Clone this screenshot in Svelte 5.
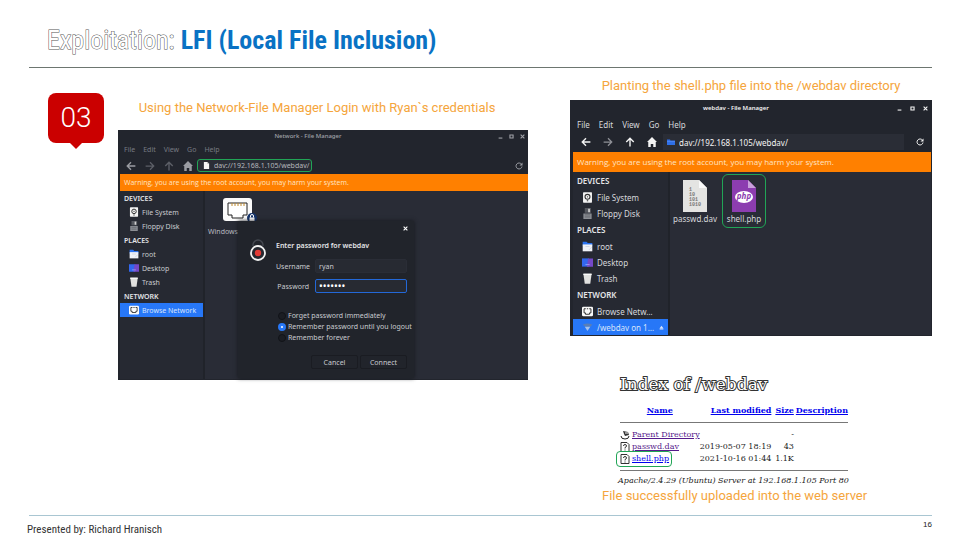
<script>
  const menus = ['File', 'Edit', 'View', 'Go', 'Help'];
  const base = [
    { head: 'DEVICES' },
    { icon: 'disk', label: 'File System' },
    { icon: 'floppy', label: 'Floppy Disk' },
    { head: 'PLACES' },
    { icon: 'folder', label: 'root' },
    { icon: 'desktop', label: 'Desktop' },
    { icon: 'trash', label: 'Trash' },
    { head: 'NETWORK' }
  ];
  const networkPlaces = [...base, { icon: 'network', label: 'Browse Network', active: true }];
  const davPlaces = [
    ...base,
    { icon: 'network', label: 'Browse Netw…' },
    { icon: 'share', label: '/webdav on 1…', active: true, eject: true }
  ];
  const files = [
    { name: 'passwd.dav', kind: 'memory', date: '2019-05-07 18:19', size: '43' },
    { name: 'shell.php', kind: 'php', date: '2021-10-16 01:44', size: '1.1K' }
  ];
  let username = $state('ryan');
  let password = $state('kali123');
  let remember = $state('session');
  const choices = [
    { value: 'never', label: 'Forget password immediately' },
    { value: 'session', label: 'Remember password until you logout' },
    { value: 'always', label: 'Remember forever' }
  ];
</script>

{#snippet icon(name)}
  <svg class="icon" viewBox="0 0 16 16" aria-hidden="true">
    {#if name === 'disk'}
      <rect x="1.5" y="0.5" width="13" height="15" rx="1" fill="#f4f4f4" />
      <circle cx="8" cy="7" r="3.6" fill="none" stroke="#333" stroke-width="1.6" />
      <circle cx="8" cy="7" r="0.9" fill="#333" />
      <path d="M7 12h2v1.5H7z" fill="#333" />
    {:else if name === 'floppy'}
      <path d="M4 0h9v7H4z" fill="#55585f" />
      <path d="M9 1h2.5v5H9z" fill="#d0d0d0" />
      <path d="M2 8h12v8H2z" fill="#8b8e94" />
      <path d="M4 10h8M4 13h8" stroke="#55585f" />
    {:else if name === 'folder'}
      <path d="M1 1h5.5l2 2H15v4H1z" fill="#2b73f0" />
      <path d="M1 5h14v10H1z" fill="#f0f2f7" />
      <path d="M5 8h6M10 13l4-4" stroke="#c8ccd8" />
    {:else if name === 'desktop'}
      <path d="M0 2h10v12H0z" fill="#3367ee" />
      <path d="M9 2h7v12H7z" fill="#7448c8" />
      <path d="M5 11h6" stroke="#a9b9ff" />
    {:else if name === 'trash'}
      <path d="M2 1h12l-2 14.5H4z" fill="#e1e1df" />
      <path d="M2 1h12v2H2z" fill="#fafafa" />
    {:else if name === 'network'}
      <rect x="0" y="1" width="16" height="14" rx="2" fill="#fafafa" />
      <path d="M3 4h2.5M7 4h2M10.5 4H13v6h-2v2H5v-2H3V4" fill="none" stroke="#222" stroke-width="1.3" />
    {:else if name === 'share'}
      <path d="M1 4q7-4 14 0l-3 3H5z" fill="#5b7fb5" />
      <path d="M4 7h8l-4 6z" fill="#a5c3ee" />
    {:else if name === 'bluefolder'}
      <path d="M0 3h6l1 2h9v9H0z" fill="#2e6fe8" />
      <path d="M0 7h16" stroke="#5f97ff" />
    {:else if name === 'page'}
      <path d="M2 0h8l4 4v12H2z" fill="#f5f5f5" />
      <path d="M10 0v4h4z" fill="#a6a6a6" />
    {:else if name === 'back'}
      <path d="M15 8H2M8 2L2 8l6 6" fill="none" stroke="currentColor" stroke-width="2.2" />
    {:else if name === 'forward'}
      <path d="M1 8h13M8 2l6 6-6 6" fill="none" stroke="currentColor" stroke-width="2" />
    {:else if name === 'up'}
      <path d="M8 15V2M2 8l6-6 6 6" fill="none" stroke="currentColor" stroke-width="2.2" />
    {:else if name === 'home'}
      <path d="M8 0l8 8h-2v8h-4v-5H6v5H2V8H0z" fill="currentColor" />
    {:else if name === 'reload'}
      <path d="M13 4.5A6 6 0 1 0 14 9" fill="none" stroke="currentColor" stroke-width="2" />
      <path d="M15 1v6H9z" fill="currentColor" />
    {:else if name === 'min'}
      <path d="M2 13h12" stroke="currentColor" stroke-width="3.5" />
    {:else if name === 'max'}
      <path d="M3 3h10v10H3z" fill="none" stroke="currentColor" stroke-width="3.5" />
    {:else if name === 'close'}
      <path d="M2 2l12 12M14 2L2 14" stroke="currentColor" stroke-width="3.5" />
    {:else if name === 'eject'}
      <path d="M8 2l6 8H2zM2 11.5h12V14H2z" fill="currentColor" />
    {/if}
  </svg>
{/snippet}

{#snippet manager(title, pathIcon, kind, places, body)}
  <section class="window {kind}" aria-label={title}>
    <header class="titlebar">
      <span class="title">{title}</span>
      <span class="controls">
        <button aria-label="Minimize">{@render icon('min')}</button>
        <button aria-label="Maximize">{@render icon('max')}</button>
        <button aria-label="Close">{@render icon('close')}</button>
      </span>
    </header>
    <nav class="menu">
      {#each menus as m}<button>{m}</button>{/each}
    </nav>
    <div class="toolbar">
      <button aria-label="Back">{@render icon('back')}</button>
      <button class="off" aria-label="Forward">{@render icon('forward')}</button>
      <button class="up" aria-label="Up">{@render icon('up')}</button>
      <button aria-label="Home">{@render icon('home')}</button>
      <label class="path">
        {@render icon(pathIcon)}
        <input aria-label="Location" value="dav://192.168.1.105/webdav/" />
      </label>
      <button class="reload" aria-label="Reload">{@render icon('reload')}</button>
    </div>
    <p class="warning">Warning, you are using the root account, you may harm your system.</p>
    <div class="panes">
      <ul class="places">
        {#each places as p}
          {#if p.head}
            <li class="head">{p.head}</li>
          {:else}
            <li class:active={p.active}>
              {@render icon(p.icon)}<span>{p.label}</span>
              {#if p.eject}<i class="eject">{@render icon('eject')}</i>{/if}
            </li>
          {/if}
        {/each}
      </ul>
      <div class="files">{@render body()}</div>
    </div>
  </section>
{/snippet}

{#snippet networkBody()}
  <div class="share">
    <svg viewBox="0 0 34 26" aria-hidden="true">
      <rect x="0" y="0" width="29" height="23" rx="3" fill="#fbfbfb" />
      <path d="M5 5h19v12h-4v3H9v-3H5z" fill="#fff" stroke="#222" stroke-width="1" />
      <path d="M9 5v3M12 5v3M15 5v3M18 5v3M21 5v3" stroke="#c08a2d" />
      <circle cx="29" cy="20" r="5" fill="#16346a" />
      <path d="M26.5 19.5h5v3.5h-5z" fill="#fff" />
      <path d="M27.5 19.5v-1.5a1.5 1.5 0 0 1 3 0v1.5" fill="none" stroke="#fff" />
    </svg>
    <span>Windows</span>
  </div>
  <form class="dialog" onsubmit={(e) => e.preventDefault()}>
    <button type="button" class="dismiss" aria-label="Close dialog">{@render icon('close')}</button>
    <svg class="auth" viewBox="0 0 18 22" aria-hidden="true">
      <path d="M4 6V5a5 5 0 0 1 10 0v1" fill="none" stroke="#444850" stroke-width="1.4" />
      <circle cx="9" cy="13" r="7" fill="#252830" stroke="#f2f2f2" stroke-width="1.8" />
      <circle cx="9" cy="13" r="3.2" fill="#e23b36" />
    </svg>
    <div class="fields">
      <strong>Enter password for webdav</strong>
      <div class="field">
        <label for="user">Username</label><input id="user" bind:value={username} />
      </div>
      <div class="field">
        <label for="pass">Password</label>
        <input id="pass" class="focused" type="password" bind:value={password} />
      </div>
      <div class="choices">
        {#each choices as c}
          <label><input type="radio" name="remember" value={c.value} bind:group={remember} />{c.label}</label>
        {/each}
      </div>
      <div class="actions"><button type="button">Cancel</button><button>Connect</button></div>
    </div>
  </form>
{/snippet}

{#snippet davBody()}
  <div class="grid">
    {#each files as f}
      <div class="file" class:marked={f.kind === 'php'}>
        <svg viewBox="0 0 26 32" aria-hidden="true">
          {#if f.kind === 'php'}
            <path d="M1 0h16l8 8v24H1z" fill="#8c3db0" />
            <path d="M17 0l8 8h-8z" fill="#c9a0dc" />
            <ellipse cx="13" cy="17" rx="9" ry="6" fill="#fff" />
            <text x="13" y="19" text-anchor="middle" class="php">php</text>
          {:else}
            <path d="M1 0h16l8 8v24H1z" fill="#e4e4e2" />
            <path d="M17 0l8 8h-8z" fill="#fafafa" />
            <text x="7" y="11" class="bits">1</text>
            <text x="7" y="16" class="bits">10</text>
            <text x="7" y="21" class="bits">101</text>
            <text x="7" y="26" class="bits">1010</text>
          {/if}
        </svg>
        <span>{f.name}</span>
      </div>
    {/each}
  </div>
{/snippet}

<div class="slide">
  <h1><span class="outline">Exploitation:</span> <b>LFI (Local File Inclusion)</b></h1>
  <main>
    <div class="badge">03</div>
    <figure class="first">
      <figcaption>Using the Network-File Manager Login with Ryan`s credentials</figcaption>
      {@render manager('Network - File Manager', 'page', 'small', networkPlaces, networkBody)}
    </figure>
    <div class="second">
      <figure>
        <figcaption>Planting the shell.php file into the /webdav directory</figcaption>
        {@render manager('webdav - File Manager', 'bluefolder', 'large', davPlaces, davBody)}
      </figure>
      <figure class="listing">
        <h2>Index of /webdav</h2>
        <table>
          <thead>
            <tr>
              <th><a href="#name">Name</a></th>
              <th><a href="#modified">Last modified</a></th>
              <th><a href="#size">Size</a></th>
              <th><a href="#description">Description</a></th>
            </tr>
          </thead>
          <tbody>
            <tr>
              <td>
                <span class="entry">
                  <svg viewBox="0 0 10 10" aria-hidden="true">
                    <path d="M1 6q0 3 4 3t4-3" fill="none" stroke="#222" />
                    <path d="M3 1l5 1 1 3-4 1-1-2z" fill="#333" />
                    <path d="M5 3h3" stroke="#fff" />
                  </svg>
                  <a class="seen" href="#parent">Parent Directory</a>
                </span>
              </td>
              <td></td><td>-</td><td></td>
            </tr>
            {#each files as f}
              <tr>
                <td>
                  <span class="entry" class:ringed={f.kind === 'php'}>
                    <svg viewBox="0 0 10 10" aria-hidden="true">
                      <path d="M1 .5h6l2 2v7H1z" fill="#fff" stroke="#333" />
                      <path d="M3.5 4q0-1.500 1.500-1.500T6.500 4Q6.500 5 5 5.500v1M5 7.500v1" fill="none" stroke="#333" />
                    </svg>
                    <a class:seen={f.kind !== 'php'} href="#{f.name}">{f.name}</a>
                  </span>
                </td>
                <td>{f.date}</td><td>{f.size}</td><td></td>
              </tr>
            {/each}
          </tbody>
        </table>
        <address>Apache/2.4.29 (Ubuntu) Server at 192.168.1.105 Port 80</address>
        <figcaption>File successfully uploaded into the web server</figcaption>
      </figure>
    </div>
  </main>
  <footer><span class="author">Presented by: Richard Hranisch</span><span>16</span></footer>
</div>

<style>
  :global(body) { margin: 0; background: #fff; }
  .slide {
    box-sizing: border-box;
    min-height: 100vh;
    display: flex;
    flex-direction: column;
    padding-right: 28px;
    font-family: Roboto, "Liberation Sans", sans-serif;
  }
  button, input { font: inherit; color: inherit; border: 0; padding: 0; background: none; }
  .icon { display: block; flex: none; }
  h1 {
    margin: 0 0 0 29px;
    padding: 14px 0 0 18px;
    height: 53px;
    border-bottom: 1px solid #6d7670;
    font: 26px/52px "Roboto Condensed", Roboto, sans-serif;
    white-space: nowrap;
  }
  h1 b { color: #0972c4; }
  .outline { color: #fff; -webkit-text-stroke: 1px #555; paint-order: stroke fill; }
  main {
    flex: 1;
    display: grid;
    grid-template-columns: 56px minmax(0, 424fr) minmax(0, 404fr);
    align-items: start;
    padding-left: 48px;
  }
  .badge {
    position: relative;
    margin-top: 25px;
    border-radius: 8px;
    background: #cb0000;
    color: #fff;
    font-size: 28px;
    font-weight: 300;
    line-height: 50px;
    text-align: center;
  }
  .badge::after {
    content: "";
    position: absolute;
    top: 100%;
    left: 50%;
    margin-left: -6px;
    border: 6px solid transparent;
    border-top-color: #cb0000;
    border-bottom: 0;
  }
  figure { margin: 0; }
  figcaption { color: #f5a53c; font-size: 13px; font-weight: 400; line-height: 20px; text-align: center; white-space: nowrap; }
  .first { padding: 30px 0 0 14px; }
  .first figcaption { margin: 0 12px 12px 0; }
  .second { padding: 8px 0 0 42px; }
  .second figcaption { margin-bottom: 4px; }

  .window { position: relative; background: #22252d; color: #c9cbd0; font-family: "Noto Sans", sans-serif; white-space: nowrap; }
  .titlebar { position: relative; box-sizing: border-box; padding-right: 32px; display: flex; justify-content: center; align-items: center; font-weight: 600; }
  .controls { position: absolute; right: 3px; display: flex; gap: 6px; }
  .controls .icon { width: 5px; height: 5px; }
  .menu { display: flex; align-items: center; }
  .toolbar { display: flex; align-items: center; }
  .path { flex: 1; display: flex; align-items: center; box-sizing: border-box; background: #2a2d36; }
  .path input { flex: 1; min-width: 0; outline: 0; }
  .warning { margin: 0; background: #ff8000; color: #ffe5c5; font-family: "Open Sans", "Noto Sans", sans-serif; }
  .panes { display: flex; background: #292c36; }
  .places { margin: 0; padding: 0; list-style: none; border-right: 2px solid #20232a; background: #262932; }
  .places li { display: flex; align-items: center; box-sizing: border-box; }
  .places .head { font-weight: 600; color: #e4e5e8; }
  .places .active { background: #2777f7; color: #d7e4fb; }
  .eject { margin-left: auto; margin-right: 4px; }
  .eject .icon { width: 5px; height: 5px; }
  .files { flex: 1; min-width: 0; }

  .small { font-size: 7px; padding: 0 0 1px 2px; }
  .small .titlebar { height: 12px; font-size: 6px; font-weight: 500; color: #a0a2a8; }
  .small .menu { height: 15px; gap: 8px; padding-left: 4px; color: #777a82; }
  .small .toolbar { height: 17px; gap: 9px; padding-left: 6px; color: #9a9ca2; }
  .small .toolbar button .icon { width: 10px; height: 10px; }
  .small .toolbar .off, .small .toolbar .up { color: #5c5f67; }
  .small .path { flex: none; width: 115px; height: 13px; gap: 4px; margin-left: -5px; padding-left: 5px; border: 1px solid #21a556; border-radius: 3px; color: #b5b7bc; }
  .small .path .icon { width: 7px; height: 7px; }
  .small .reload { margin-left: auto; margin-right: 5px; }
  .small .toolbar .reload .icon { width: 8px; height: 8px; }
  .small .warning { line-height: 17px; padding-left: 4px; }
  .small .panes { height: 188px; }
  .small .places { width: 83px; }
  .small .places li { height: 14px; padding-left: 9px; gap: 3px; }
  .small .places li .icon { width: 10px; height: 10px; }
  .small .places .head { padding-left: 4px; }

  .large { font-size: 8px; padding: 0 1px 1px 3px; color: #d6d8dc; }
  .large .titlebar { height: 16px; font-size: 6px; color: #f4f4f4; }
  .large .controls { gap: 8px; }
  .large .menu { height: 16px; gap: 9px; padding-left: 4px; }
  .large .toolbar { height: 20px; gap: 12px; padding-left: 8px; color: #f4f4f4; }
  .large .toolbar button .icon { width: 10px; height: 10px; }
  .large .toolbar .off { color: #8f9197; }
  .large .path { height: 16px; gap: 4px; margin-left: -6px; padding-left: 4px; }
  .large .path .icon { width: 8px; height: 8px; }
  .large .reload { margin-right: 7px; }
  .large .toolbar .reload .icon { width: 8px; height: 8px; }
  .large .warning { line-height: 20px; padding-left: 4px; }
  .large .places { width: 95px; }
  .large .places li { height: 16px; padding-left: 9px; gap: 4px; }
  .large .places li .icon { width: 11px; height: 11px; }
  .large .places .head { height: 17px; padding-left: 4px; }
  .large .places .eject .icon { width: 5px; height: 5px; }

  .share { display: flex; flex-direction: column; width: 40px; padding: 7px 0 0 18px; color: #b9bbc0; }
  .share svg { width: 34px; height: 26px; }
  .share span { margin-left: -15px; line-height: 16px; }
  .dialog {
    position: absolute;
    right: 114px;
    bottom: 2px;
    width: 176px;
    height: 157px;
    box-sizing: border-box;
    display: flex;
    gap: 9px;
    padding: 18px 7px 9px 11px;
    background: #21242b;
    box-shadow: 0 0 4px #15171c;
    color: #c9cbd0;
  }
  .dismiss { position: absolute; right: 6px; top: 5px; color: #fff; }
  .dismiss .icon { width: 5px; height: 5px; }
  .auth { flex: none; width: 18px; height: 24px; }
  .fields { flex: 1; display: flex; flex-direction: column; min-width: 0; }
  .fields strong { line-height: 14px; color: #e4e5e8; font-weight: 600; }
  .field { display: flex; align-items: center; margin-top: 6px; gap: 6px; }
  .field label { width: 33px; text-align: right; }
  .field input { flex: 1; min-width: 0; box-sizing: border-box; height: 14px; padding: 0 3px; border: 1px solid #2a2d36; border-radius: 2px; background: #272a32; }
  .field input.focused { border-color: #2368d8; color: #fff; outline: 0; font-size: 10px; }
  .choices { margin: 17px 0 0 2px; }
  .choices label { display: flex; align-items: center; gap: 2px; height: 11px; }
  .choices input { flex: none; appearance: none; box-sizing: border-box; width: 8px; height: 8px; margin: 0; border: 1px solid #111318; border-radius: 50%; background: #1b1d23; }
  .choices input:checked { border: 3px solid #2777f7; background: #fff; }
  .actions { display: flex; justify-content: flex-end; gap: 2px; margin-top: auto; }
  .actions button { width: 47px; height: 14px; border: 1px solid #1a1c22; border-radius: 2px; }

  .grid { display: flex; gap: 5px; padding: 2px 0 0 3px; }
  .file { box-sizing: border-box; width: 44px; height: 54px; padding-top: 6px; display: flex; flex-direction: column; align-items: center; }
  .file svg { width: 26px; height: 32px; }
  .file span { line-height: 14px; }
  .marked { border: 1px solid #21a556; border-radius: 6px; padding-top: 5px; }
  .php { font: italic 700 8px "Noto Sans", sans-serif; fill: #8c3db0; }
  .bits { font: 700 5px "Liberation Mono", monospace; fill: #777; }

  .listing { padding: 38px 0 0 48px; font-family: "DejaVu Serif", serif; }
  h2 { margin: 0 0 10px 2px; font-size: 17px; line-height: 20px; font-weight: 400; color: #fff; -webkit-text-stroke: 2px #333; paint-order: stroke fill; }
  table { width: 220px; margin-left: 2px; border-collapse: collapse; font-size: 8px; line-height: 12px; white-space: nowrap; color: #222; }
  th, td { padding: 0; height: 12px; text-align: right; }
  thead th { height: 18px; vertical-align: top; border-bottom: 1px solid #777; }
  thead th:first-child { text-align: center; }
  thead th:nth-child(3) { padding: 0 2px 0 4px; }
  tbody td:nth-child(3) { padding-right: 2px; }
  tbody td:first-child { text-align: left; }
  tbody tr:first-child td { padding-top: 6px; }
  tbody tr:last-child td { padding-bottom: 5px; border-bottom: 1px solid #777; }
  table a { color: #0000ee; }
  table a.seen { color: #551a8b; }
  .entry { position: relative; display: flex; align-items: center; gap: 2px; height: 12px; }
  .entry svg { width: 10px; height: 10px; }
  .ringed::after { content: ""; position: absolute; left: -4px; top: -2px; width: 54px; height: 14px; border: 1px solid #21a556; border-radius: 4px; }
  address { margin-top: 5px; font-size: 8px; line-height: 10px; color: #222; white-space: nowrap; }
  .listing figcaption { margin: 0 0 0 -16px; font-family: Roboto, sans-serif; text-align: left; }

  footer {
    display: flex;
    justify-content: space-between;
    height: 24px;
    margin-left: 29px;
    border-top: 1px solid #a9c6d2;
    font: 8px/18px "Liberation Sans", sans-serif;
    color: #222;
  }
  .author { margin-left: -2px; font: 11px/28px "Roboto Condensed", Roboto, sans-serif; color: #333; }
</style>
